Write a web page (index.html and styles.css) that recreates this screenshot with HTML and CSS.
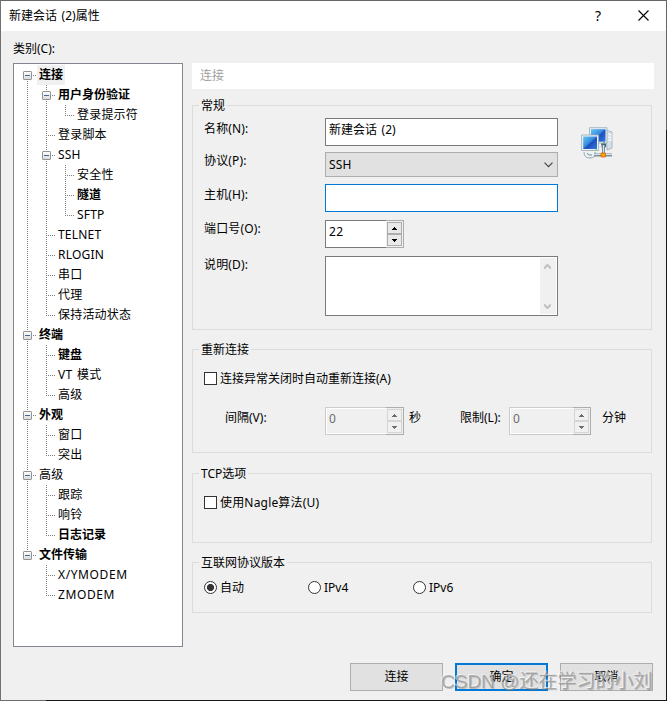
FILE: index.html
```html
<!DOCTYPE html>
<html lang="zh-CN">
<head>
<meta charset="utf-8">
<title>新建会话 (2)属性</title>
<link rel="stylesheet" href="styles.css">
</head>
<body>
<svg width="0" height="0" class="defs" aria-hidden="true">
  <defs>
    <linearGradient id="boxfill" x1="0" y1="0" x2="0" y2="1"><stop offset="0" stop-color="#fff"/><stop offset="1" stop-color="#d8d8d8"/></linearGradient>
    <linearGradient id="screen" x1="0" y1="0" x2="1" y2="1"><stop offset="0" stop-color="#66c5f2"/><stop offset=".45" stop-color="#388de0"/><stop offset=".55" stop-color="#1c50bd"/><stop offset="1" stop-color="#3978df"/></linearGradient>
    <symbol id="minus" viewBox="0 0 9 9"><rect x=".5" y=".5" width="8" height="8" rx=".6" fill="url(#boxfill)" stroke="#919191"/><path d="M2 4.500h5" stroke="#4b63a7"/></symbol>
    <symbol id="up" viewBox="0 0 5 3"><path d="M2 0h1v1h1v1h1v1H0V2h1V1h1z" fill="currentColor"/></symbol>
    <symbol id="down" viewBox="0 0 5 3"><path d="M0 0h5v1H4v1H3v1H2V2H1V1H0z" fill="currentColor"/></symbol>
  </defs>
</svg>
<div class="window">
  <header class="titlebar">
    <span class="title">新建会话 (2)属性</span>
    <span class="help">?</span>
    <svg class="close" width="11" height="11" viewBox="0 0 11 11"><path d="M.5 .5l10 10M10.500 .5l-10 10" stroke="#000" stroke-width="1.1"/></svg>
  </header>
  <div class="category">类别(C):</div>
  <main class="main">
    <nav class="tree">
      <ul class="root">
        <li><div class="node bold"><svg><use href="#minus"/></svg><span class="selected">连接</span></div>
          <ul>
            <li><div class="node bold"><svg><use href="#minus"/></svg><span>用户身份验证</span></div>
              <ul><li><div class="node"><span>登录提示符</span></div></li></ul>
            </li>
            <li><div class="node"><span>登录脚本</span></div></li>
            <li><div class="node"><svg><use href="#minus"/></svg><span>SSH</span></div>
              <ul>
                <li><div class="node"><span>安全性</span></div></li>
                <li><div class="node bold"><span>隧道</span></div></li>
                <li><div class="node"><span>SFTP</span></div></li>
              </ul>
            </li>
            <li><div class="node"><span>TELNET</span></div></li>
            <li><div class="node"><span>RLOGIN</span></div></li>
            <li><div class="node"><span>串口</span></div></li>
            <li><div class="node"><span>代理</span></div></li>
            <li><div class="node"><span>保持活动状态</span></div></li>
          </ul>
        </li>
        <li><div class="node bold"><svg><use href="#minus"/></svg><span>终端</span></div>
          <ul>
            <li><div class="node bold"><span>键盘</span></div></li>
            <li><div class="node"><span>VT 模式</span></div></li>
            <li><div class="node"><span>高级</span></div></li>
          </ul>
        </li>
        <li><div class="node bold"><svg><use href="#minus"/></svg><span>外观</span></div>
          <ul>
            <li><div class="node"><span>窗口</span></div></li>
            <li><div class="node"><span>突出</span></div></li>
          </ul>
        </li>
        <li><div class="node"><svg><use href="#minus"/></svg><span>高级</span></div>
          <ul>
            <li><div class="node"><span>跟踪</span></div></li>
            <li><div class="node"><span>响铃</span></div></li>
            <li><div class="node bold"><span>日志记录</span></div></li>
          </ul>
        </li>
        <li><div class="node bold"><svg><use href="#minus"/></svg><span>文件传输</span></div>
          <ul>
            <li><div class="node modem"><span>X/YMODEM</span></div></li>
            <li><div class="node modem"><span>ZMODEM</span></div></li>
          </ul>
        </li>
      </ul>
    </nav>
    <div class="panel">
      <div class="banner">连接</div>
      <section class="group general">
        <h2>常规</h2>
        <div class="body">
          <div class="fields">
            <div class="row name"><label>名称(N):</label><div class="input">新建会话 (2)</div></div>
            <div class="row proto"><label>协议(P):</label><div class="combo"><span>SSH</span><svg width="9" height="6" viewBox="0 0 9 6"><path d="M.5 .7l4 4 4-4" fill="none" stroke="#444" stroke-width="1.2"/></svg></div></div>
            <div class="row host"><label>主机(H):</label><div class="input focus"></div></div>
            <div class="row port"><label>端口号(O):</label>
              <div class="spin"><span>22</span><div class="arrows"><i><svg><use href="#up"/></svg></i><i><svg><use href="#down"/></svg></i></div></div></div>
            <div class="row desc"><label>说明(D):</label>
              <div class="area"><div class="scroll">
                <svg width="7" height="6" viewBox="0 0 7 6"><path d="M0 4.500L3.500 1 7 4.500" fill="none" stroke="#bfbfbf" stroke-width="2"/></svg>
                <svg width="7" height="6" viewBox="0 0 7 6"><path d="M0 1.500L3.500 5 7 1.500" fill="none" stroke="#bfbfbf" stroke-width="2"/></svg>
              </div></div></div>
          </div>
          <svg class="computers" width="32" height="32" viewBox="0 0 32 32">
            <path d="M25 3l6 2v16l-5 2z" fill="#d6e0e8" stroke="#8fa5b5" stroke-width=".7"/>
            <path d="M27 7l4 1M27 10l4 .5M27 13l4 0" stroke="#fff"/>
            <path d="M20 16l5 0 0 4-4 2z" fill="#3e6680"/>
            <path d="M8.500 .7h17.500v15.500h-17.500z" fill="#e9f0f3" stroke="#9aabb6" stroke-width=".8"/>
            <path d="M10 2.200h14.500v12.500H10z" fill="url(#screen)"/>
            <path d="M3 25q0 6 6 6t5-6" fill="#eef3f5" stroke="#91a5b0"/>
            <path d="M6 26q1 3 5 2" fill="none" stroke="#718999"/>
            <path d="M.6 8h17v15.500H.6z" fill="#eef3f6" stroke="#94a8b5" stroke-width=".8"/>
            <path d="M2.200 9.500h13.800v12.500H2.200z" fill="url(#screen)"/>
            <path d="M22.500 18v9M13 28h18" stroke="#7d919e" stroke-width="3"/>
            <path d="M22.500 18v9M13 27.500h18" stroke="#d4e1e8"/>
            <path d="M20 26h4.500v4H20z" fill="#ff9e0b" stroke="#ce6a08" stroke-width=".8"/>
            <path d="M22 15.500h2M14 23h2" stroke="#62c35a"/>
          </svg>
        </div>
      </section>
      <section class="group reconnect">
        <h2>重新连接</h2>
        <div class="option"><span class="check"></span><span>连接异常关闭时自动重新连接(A)</span></div>
        <div class="limits">
          <label class="interval">间隔(V):</label>
          <div class="spin off"><span>0</span><div class="arrows"><i><svg><use href="#up"/></svg></i><i><svg><use href="#down"/></svg></i></div></div>
          <span class="unit sec">秒</span>
          <label class="max">限制(L):</label>
          <div class="spin off wide"><span>0</span><div class="arrows"><i><svg><use href="#up"/></svg></i><i><svg><use href="#down"/></svg></i></div></div>
          <span class="unit min">分钟</span>
        </div>
      </section>
      <section class="group tcp">
        <h2>TCP选项</h2>
        <div class="option"><span class="check"></span><span>使用Nagle算法(U)</span></div>
      </section>
      <section class="group ip">
        <h2>互联网协议版本</h2>
        <div class="radios">
          <div class="option"><span class="radio on"></span><span>自动</span></div>
          <div class="option"><span class="radio"></span><span>IPv4</span></div>
          <div class="option"><span class="radio"></span><span>IPv6</span></div>
        </div>
      </section>
    </div>
  </main>
  <footer class="buttons">
    <div class="button">连接</div>
    <div class="button primary">确定</div>
    <div class="button">取消</div>
  </footer>
  <div class="watermark">CSDN @还在学习的小刘</div>
</div>
</body>
</html>
```
FILE: styles.css
```css
* { box-sizing: border-box; }
body { margin: 0; }
ul, h2 { margin: 0; padding: 0; list-style: none; }
svg { display: block; flex: none; }
.defs { position: absolute; }

.window {
  position: relative;
  width: 667px;
  height: 701px;
  overflow: hidden;
  background: linear-gradient(90deg, #6b6b6b 45px, #18181c 45px) 0 700px / 667px 1px no-repeat,
              linear-gradient(#666 130px, #18181c 130px) 665px 0 / 1px 701px no-repeat,
              #f0f0f0;
  border-left: 1px solid #737073;
  color: #000;
  font: 12px/20px "Noto Sans", "Noto Sans CJK SC", sans-serif;
  white-space: nowrap;
  word-spacing: 1.5px;
}
.titlebar {
  display: flex;
  align-items: center;
  width: 665px;
  height: 31px;
  padding: 0 17px 0 8px;
  border-top: 1px solid #666;
  background: #fff;
}
.title { flex: 1; }
.help { margin-right: 37px; font-size: 14px; }
.close { margin-top: -1px; }
.category { margin: 8px 0 4px 12px; }
.main { display: flex; gap: 9px; height: 584px; padding-left: 12px; }

.tree { width: 170px; padding: 1px 4px; border: 1px solid #828790; background: #fff; }
.tree li {
  background: repeating-linear-gradient(#808080 0 1px, transparent 1px 2px) 9px 0 / 1px 100% no-repeat;
}
.tree li:last-child { background-size: 1px 11px; }
.tree .root > li:first-child { background-position: 9px 10px; }
.tree ul ul { margin-left: 19px; }
.node {
  display: flex;
  align-items: center;
  height: 20px;
  padding-left: 19px;
  background: repeating-linear-gradient(90deg, #808080 0 1px, transparent 1px 2px) 9px 10px / 9px 1px no-repeat;
  letter-spacing: .2px;
}
.node svg { width: 9px; height: 9px; margin: 1px 5px 0 -14px; }
.node span { padding: 0 2px; }
.node.modem { letter-spacing: .6px; }
.node:lang(zh) span { margin-right: -1px; }
.node.bold { letter-spacing: 0; }
.bold { font-weight: 700; }
.selected { background: #f0f0f0; }

.panel { width: 462px; }
.banner { height: 26px; padding: 3px 8px; background: #fff; color: #a0a0a0; }
.group { width: 460px; border: 1px solid #dcdcdc; }
.group h2 {
  width: max-content;
  height: 20px;
  margin: -10px 0 -1px 6px;
  padding: 0 2px;
  background: #f0f0f0;
  font-size: 12px;
  font-weight: 400;
}
.general { height: 225px; margin-top: 16px; }
.reconnect { height: 104px; margin-top: 19px; }
.tcp { height: 70px; margin-top: 20px; }
.ip { height: 51px; margin-top: 19px; }

.body { display: flex; gap: 23px; padding: 3px 0 0 11px; }
.row { display: flex; align-items: flex-start; }
.row label { width: 121px; letter-spacing: .15px; }
.name { height: 34px; }
.proto { height: 32px; }
.host, .port { height: 36px; }
.name label, .host label { padding-top: 1px; }
.proto label, .port label, .desc label { margin-top: -1px; }
.input, .combo, .area { width: 233px; border: 1px solid #7a7a7a; background: #fff; }
.input { height: 28px; padding: 1px 3px; }
.input.focus { border-color: #0078d7; }
.combo {
  display: flex;
  align-items: center;
  justify-content: space-between;
  height: 25px;
  padding: 0 4px 0 3px;
  border-color: #adadad;
  background: #e1e1e1;
  letter-spacing: .2px;
}
.area { display: flex; justify-content: flex-end; height: 60px; padding: 1px; }
.scroll {
  display: flex;
  flex-direction: column;
  align-items: center;
  justify-content: space-between;
  width: 16px;
  padding: 6px 1px 5px 0;
  background: #f0f0f0;
}
.computers { margin-top: 9px; }

.spin { display: flex; width: 79px; height: 28px; border: 1px solid #7a7a7a; border-right: 0; background: #fff; }
.spin > span { flex: 1; padding: 1px 3px; letter-spacing: .3px; }
.arrows { width: 18px; margin: -1px 0; padding: 1px; border: 1px solid #adadad; border-left: 0; background: #f0f0f0; }
.arrows i {
  display: flex;
  align-items: center;
  justify-content: center;
  width: 15px;
  height: 12px;
  border: 1px solid #adadad;
  background: #e9e9e9;
}
.arrows svg { width: 5px; height: 3px; }
.off { border-color: #ccc; background: #f0f0f0; box-shadow: inset 0 0 0 1px #fff; color: #6d6d6d; }
.off .arrows i { border-color: #d5d5d5; background: #f0f0f0; }
.wide { width: 82px; }

.option { display: flex; align-items: center; gap: 3px; height: 20px; }
.reconnect .option { margin: 10px 0 0 11px; }
.tcp .option { margin: 10px 0 0 11px; letter-spacing: .18px; }
.check { width: 13px; height: 13px; margin-top: -2px; border: 1px solid #333; background: #fff; }
.limits { display: flex; align-items: flex-start; margin-top: 18px; padding-left: 32px; }
.limits label, .unit { margin-top: 1px; }
.interval { width: 100px; }
.sec { width: 56px; padding-left: 5px; }
.max { width: 49px; }
.min { padding-left: 11px; }
.radios { display: grid; grid-template-columns: 104px 105px auto; margin: 6px 0 0 11px; }
.radio { width: 13px; height: 13px; margin-top: -2px; border: 1px solid #333; border-radius: 50%; background: #fff; }
.radio.on { background: radial-gradient(#333 3.2px, #fff 3.900px); }

.buttons { display: flex; justify-content: flex-end; gap: 12px; margin-top: 16px; padding-right: 14px; }
.button { width: 93px; height: 28px; border: 1px solid #adadad; background: #e1e1e1; line-height: 26px; text-align: center; }
.primary { border: 2px solid #0078d7; line-height: 24px; }
.watermark {
  position: absolute;
  top: 669px;
  left: 440px;
  color: rgba(150, 150, 150, .75);
  font: 19px/26px "Liberation Sans", "Noto Sans CJK SC", sans-serif;
  word-spacing: 0;
  text-shadow: -1px -1px 0 rgba(255, 255, 255, .6), 1px 1px 0 rgba(90, 90, 90, .3);
}
```
